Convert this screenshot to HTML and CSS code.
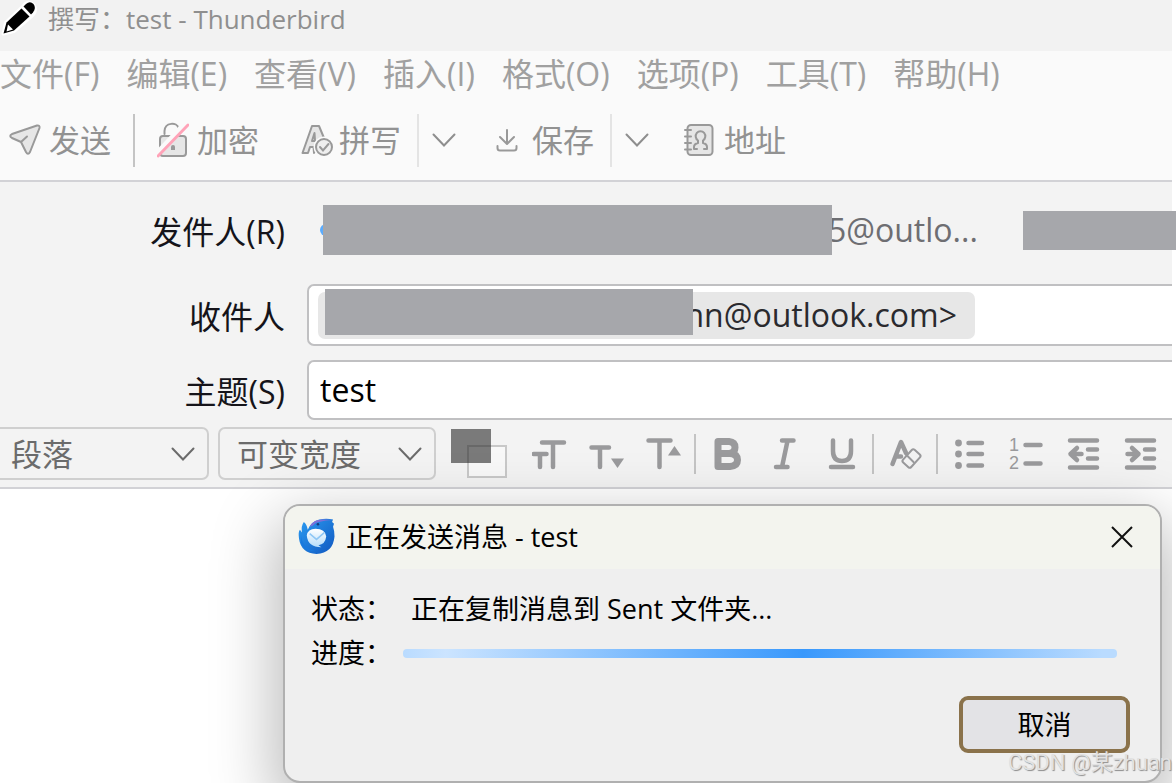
FILE: index.html
```html
<!DOCTYPE html>
<html lang="zh-CN">
<head>
<meta charset="utf-8">
<title>撰写：test - Thunderbird</title>
<link rel="stylesheet" href="styles.css">
</head>
<body>
<div class="window">
  <header class="titlebar">
    <svg class="pencil" width="38" height="38" viewBox="0 0 38 38" aria-hidden="true">
      <path d="M3 34 5.500 22.500 23 6Q28-1 34 5 38 11 31 17L14 31.500Z" fill="#fff" stroke="#fff" stroke-width="3" stroke-linejoin="round"/>
      <path d="M3.500 33.500 6.500 22.500 21.500 8.500 29.500 16.500 14 30.500Z" fill="#000"/>
      <path d="M23.500 6.500 26 4Q30 .500 33.500 4 36.500 8 33 12.500L31 14.500Z" fill="#000"/>
      <path d="M8 24.500 13 29.500 6.500 31.500Z" fill="#fff"/>
    </svg>
    <h1 class="title">撰写：test - Thunderbird</h1>
  </header>

  <nav class="menubar">
    <button class="menu">文件(F)</button>
    <button class="menu">编辑(E)</button>
    <button class="menu">查看(V)</button>
    <button class="menu">插入(I)</button>
    <button class="menu">格式(O)</button>
    <button class="menu">选项(P)</button>
    <button class="menu">工具(T)</button>
    <button class="menu">帮助(H)</button>
  </nav>

  <div class="toolbar">
    <button class="tool tool-send">
      <svg width="32" height="32" viewBox="0 0 32 32" aria-hidden="true"><path d="M28 1.500 3 10Q-.500 12 3 14L12 18 17 28Q19 31.500 21 28L30.500 4Q31 1 28 1.500ZM12 18 18 12.500" fill="#e6e6e6" stroke="#999" stroke-width="2" stroke-linejoin="round" stroke-linecap="round"/></svg>
      <span>发送</span>
    </button>
    <span class="rule"></span>
    <button class="tool tool-lock">
      <svg width="32" height="36" viewBox="0 0 32 36" aria-hidden="true"><path d="M7.500 12V9C8 0 20 0 21.500 6" fill="none" stroke="#999" stroke-width="2" stroke-linecap="round"/><rect x="3" y="14" width="26" height="20" rx="3" fill="#e6e6e6" stroke="#999" stroke-width="2"/><path d="M14 28V25A2 2 0 0 1 18 25V28Z" fill="#999"/><path d="M0 32 29 1" stroke="#fafafa" stroke-width="6"/><path d="M1 34 31 3" stroke="#ffa3b8" stroke-width="3" stroke-linecap="round"/></svg>
      <span>加密</span>
    </button>
    <button class="tool tool-spell">
      <svg width="32" height="34" viewBox="0 0 32 34" aria-hidden="true"><path d="M1.500 30 11 3H18L23 15 13 30 12.500 24H9L7 30ZM11 18H14L13.500 10Z" fill="#e6e6e6" stroke="#999" stroke-width="2" stroke-linejoin="round"/><circle cx="23" cy="24" r="10.500" fill="#fafafa"/><circle cx="23" cy="24" r="8" fill="#eee" stroke="#999" stroke-width="2"/><path d="M19 24 22 27.500 27.500 21" fill="none" stroke="#999" stroke-width="2" stroke-linecap="round"/></svg>
      <span>拼写</span>
    </button>
    <span class="rule rule-light"></span>
    <button class="drop" aria-label="拼写选项"><svg width="24" height="14" viewBox="0 0 24 14"><path d="M1.500 1.500 12 12.500 22.500 1.500" fill="none" stroke="#8e8e8e" stroke-width="2" stroke-linecap="round"/></svg></button>
    <button class="tool tool-save">
      <svg width="22" height="24" viewBox="0 0 22 24" aria-hidden="true"><path d="M11 2V15M4 9 11 16 18 9M1.500 18V20Q1.500 22.500 4 22.500H18Q20.500 22.500 20.500 20V18" fill="none" stroke="#999" stroke-width="2" stroke-linecap="round" stroke-linejoin="round"/></svg>
      <span>保存</span>
    </button>
    <span class="rule rule-light"></span>
    <button class="drop" aria-label="保存选项"><svg width="24" height="14" viewBox="0 0 24 14"><path d="M1.500 1.500 12 12.500 22.500 1.500" fill="none" stroke="#8e8e8e" stroke-width="2" stroke-linecap="round"/></svg></button>
    <button class="tool tool-book">
      <svg width="30" height="34" viewBox="0 0 30 34" aria-hidden="true"><rect x="3.500" y="2" width="25" height="30" rx="3.500" fill="#e6e6e6" stroke="#999" stroke-width="2"/><path d="M1 7H7M1 13.500H7M1 20H7M1 26.500H7" stroke="#999" stroke-width="2" stroke-linecap="round"/><path d="M10 26V24Q10 21 14 20V17.500A4.800 5 0 1 1 19 17.500V20Q23 21 23 24V26M10 26H13M23 26H20" fill="none" stroke="#999" stroke-width="2" stroke-linejoin="round" stroke-linecap="round"/></svg>
      <span>地址</span>
    </button>
  </div>

  <section class="headers">
    <label class="label" for="from">发件人(R)</label>
    <div class="from">
      <output class="identity" id="from"><span class="dot"></span><span class="mask mask-from"></span><span class="address">5@outlo...</span></output>
      <span class="mask mask-account"></span>
    </div>
    <span class="label" id="to-label">收件人</span>
    <div class="field field-to" role="group" aria-labelledby="to-label">
      <span class="pill">nn@outlook.com&gt;<span class="mask mask-pill"></span></span>
    </div>
    <label class="label" for="subject">主题(S)</label>
    <input class="field field-subject" id="subject" type="text" value="test">
  </section>

  <div class="format">
    <div class="picker picker-block">
      <select aria-label="段落格式"><option>段落</option></select>
      <svg width="24" height="14" viewBox="0 0 24 14"><path d="M1.500 1.500 12 12.500 22.500 1.500" fill="none" stroke="#6b6b6b" stroke-width="2" stroke-linecap="round"/></svg>
    </div>
    <div class="picker picker-font">
      <select aria-label="字体"><option>可变宽度</option></select>
      <svg width="24" height="14" viewBox="0 0 24 14"><path d="M1.500 1.500 12 12.500 22.500 1.500" fill="none" stroke="#6b6b6b" stroke-width="2" stroke-linecap="round"/></svg>
    </div>
    <button class="swatch" aria-label="颜色"><svg width="56" height="49" viewBox="0 0 56 49"><rect x="17" y="17" width="38" height="31" fill="#f8f8f8" stroke="#c8c8c8" stroke-width="2"/><path d="M0 0H40V34H0Z" fill="#7a7a7a"/><path d="M17 34V17H40" fill="none" stroke="#686868" stroke-width="2"/></svg></button>
    <button class="fmt" aria-label="字号"><svg class="ink" width="36" height="36" viewBox="0 0 36 36"><path d="M10 6.500H32M21 7V31M1.500 18H14.500M8 18V31"/></svg></button>
    <button class="fmt" aria-label="缩小字号"><svg class="ink" width="36" height="36" viewBox="0 0 36 36"><path d="M2.500 11.500H20M11 12V31"/><path class="solid" d="M22 22.500H35L28.500 32Z"/></svg></button>
    <button class="fmt" aria-label="放大字号"><svg class="ink" width="36" height="36" viewBox="0 0 36 36"><path d="M2.500 4.500H24.500M13.500 5V31"/><path class="solid" d="M22 19.500H35L28.500 10Z"/></svg></button>
    <span class="split"></span>
    <button class="fmt" aria-label="粗体"><svg class="ink heavy" width="36" height="36" viewBox="0 0 36 36"><path d="M8 5.500H19Q25 6 25 11.500 25 17 19 17.500H8H20Q27.500 18 27.500 24 27.500 30 20 30.500H8Z"/></svg></button>
    <button class="fmt" aria-label="斜体"><svg class="ink" width="36" height="36" viewBox="0 0 36 36"><path d="M15 4.500H26.500M9 31H20.500M20.500 5 15 31"/></svg></button>
    <button class="fmt" aria-label="下划线"><svg class="ink" width="36" height="36" viewBox="0 0 36 36"><path d="M9 4.500V15Q9 25 18 25 27 25 27 15V4.500M7 31H29"/></svg></button>
    <span class="split"></span>
    <button class="fmt" aria-label="清除格式"><svg class="ink" width="36" height="36" viewBox="0 0 36 36"><path d="M4.500 28 13 6 18 17M8 20.500H13"/><rect class="thin" x="15" y="17" width="17" height="11" rx="2" transform="rotate(-48 23.500 22.500)"/><path class="thin" d="M18 18.500 25.500 26"/></svg></button>
    <span class="split"></span>
    <button class="fmt" aria-label="项目符号列表"><svg class="ink" width="36" height="36" viewBox="0 0 36 36"><path d="M16.500 7H30M16.500 18H30M16.500 29.500H30"/><g class="solid"><circle cx="6.500" cy="7" r="3.400"/><circle cx="6.500" cy="18" r="3.400"/><circle cx="6.500" cy="29.500" r="3.400"/></g></svg></button>
    <button class="fmt" aria-label="编号列表"><svg class="ink" width="36" height="48" viewBox="0 -6 36 48"><path d="M16.500 9H31.500M16.500 27.500H31.500"/><text x="0" y="15">1</text><text x="0" y="33">2</text></svg></button>
    <button class="fmt" aria-label="减少缩进"><svg class="ink" width="36" height="36" viewBox="0 0 36 36"><path d="M4 4.500H31M4 31.500H31M22 13.500H31M22 22.500H31M4.500 18H15.500M11 12 4.500 18 11 24"/></svg></button>
    <button class="fmt" aria-label="增加缩进"><svg class="ink" width="36" height="36" viewBox="0 0 36 36"><path d="M4 4.500H31M4 31.500H31M22 13.500H31M22 22.500H31M4.500 18H15.500M9 12 15.500 18 9 24"/></svg></button>
  </div>

  <main class="editor"></main>

  <div class="overlay">
    <section class="dialog" role="dialog" aria-labelledby="dialog-title">
      <header class="dialog-head">
        <svg width="37" height="37" viewBox="0 0 38 38" aria-hidden="true">
          <defs>
            <linearGradient id="body" x1="0" y1="0" x2="1" y2="1"><stop offset="0" stop-color="#2b9cf2"/><stop offset="1" stop-color="#1158c0"/></linearGradient>
            <linearGradient id="mail" x1="0" y1="0" x2="0" y2="1"><stop offset="0" stop-color="#fff"/><stop offset="1" stop-color="#b5dcfa"/></linearGradient>
          </defs>
          <path d="M6 4Q9 6 10 12 14 3 22 1.500 29 0 36 1.500L35 4 37 6 36 9Q37.500 13 37.500 19 36 36 19 37 3 36 1 21 0 14 2 12L4 15Q3 8 6 4Z" fill="url(#body)"/>
          <path d="M12 9Q16 1 26 1.500L35 2Q28 2.500 24 3.500 18 4 15 8Z" fill="#7f70d8"/>
          <path d="M3 17Q4 31 18 34 7 35 3 26Z" fill="#1979de"/>
          <path d="M9 18Q10 11 18 11 28 11 29 19 28 27 21 28L24 30Q10 30 9 18Z" fill="url(#mail)"/>
          <path d="M12 16 19 22 27 15" fill="none" stroke="#8fc7f5" stroke-width="1.500"/>
          <circle cx="20.500" cy="6.500" r="1.300" fill="#173b7e"/>
        </svg>
        <h2 class="dialog-title" id="dialog-title">正在发送消息 - test</h2>
        <button class="close" aria-label="关闭"><svg width="22" height="22" viewBox="0 0 22 22"><path d="M1 1 21 21M21 1 1 21" stroke="#111" stroke-width="2"/></svg></button>
      </header>
      <div class="dialog-body">
        <span class="key">状态：</span>
        <span class="status">正在复制消息到 Sent 文件夹...</span>
        <label class="key" for="progress">进度：</label>
        <progress class="progress" id="progress" value="0" max="100"></progress>
        <button class="cancel">取消</button>
      </div>
    </section>
  </div>
</div>
<p class="watermark">CSDN @某zhuan</p>
</body>
</html>
```

FILE: styles.css
```css
* { box-sizing: border-box; }

body {
  margin: 0;
  position: relative;
  min-height: 100vh;
  overflow: hidden;
  background: #fff;
  font-family: "Open Sans", "Noto Sans CJK SC", sans-serif;
  font-size: 31px;
  line-height: 40px;
  color: #15141a;
}

button, input, select {
  margin: 0;
  padding: 0;
  border: 0;
  background: none;
  font: inherit;
  color: inherit;
}

svg { display: block; flex: none; }

.window {
  position: relative;
  display: flex;
  flex-direction: column;
  min-height: 100vh;
  margin-right: 4px;
}

.titlebar {
  display: flex;
  align-items: flex-start;
  gap: 10px;
  height: 51px;
  background: #f2f2f2;
}

.title {
  margin: 0;
  font-size: 26px;
  font-weight: 400;
  line-height: 38px;
  color: #8f8f8f;
}

.menubar {
  display: flex;
  gap: 27px;
  height: 49px;
  align-items: center;
  padding-bottom: 4px;
  background: #fafafa;
  color: #a0a0a0;
  font-size: 32px;
}

.menu { white-space: nowrap; }

.toolbar {
  display: flex;
  align-items: center;
  height: 82px;
  padding-left: 9px;
  background: #fafafa;
  border-bottom: 2px solid #d2d2d6;
  color: #929292;
}

.tool {
  display: flex;
  align-items: center;
  gap: 8px;
  white-space: nowrap;
}

.tool-send { margin-right: 22px; }
.tool-lock { margin: 0 42px 0 22px; }
.tool-spell { gap: 6px; margin-right: 16px; }
.tool-save { gap: 14px; margin: 0 16px 0 40px; }
.tool-book { gap: 10px; margin-left: 35px; }
.drop { margin-left: 13px; }

.rule {
  width: 2px;
  height: 53px;
  background: #c4c4c4;
}

.rule-light { background: #e4e4e4; }

.headers {
  display: grid;
  grid-template-columns: 285px 1fr;
  column-gap: 22px;
  grid-template-rows: 80px 62px 60px;
  row-gap: 14px;
  padding: 8px 0 7px;
  background: #f3f3f3;
  font-size: 32px;
}

.label {
  align-self: center;
  justify-self: end;
  padding-top: 4px;
}

.mask { background: #a6a7ab; }

.from {
  display: flex;
  align-items: center;
  margin-right: -4px;
  padding-left: 13px;
  color: #6e6e72;
}

.identity {
  display: flex;
  align-items: center;
  flex: 0 0 703px;
}

.dot {
  width: 12px;
  height: 12px;
  margin-right: -9px;
  border-radius: 50%;
  background: #5aacff;
}

.mask-from {
  position: relative;
  z-index: 1;
  flex: 0 0 509px;
  height: 50px;
}

.address { margin-left: -4px; }

.mask-account {
  flex: 1;
  height: 39px;
}

.field {
  border: 2px solid #c0c0c2;
  border-right: 0;
  border-radius: 7px 0 0 7px;
  background: #fff;
}

.field-to {
  display: flex;
  align-items: center;
  padding-left: 9px;
}

.pill {
  position: relative;
  flex: 0 0 657px;
  height: 47px;
  padding-right: 18px;
  border-radius: 7px;
  background: #e7e7e7;
  color: #2a2a2e;
  line-height: 46px;
  text-align: right;
}

.mask-pill {
  position: absolute;
  left: 7px;
  top: -3px;
  width: 368px;
  height: 46px;
}

.field-subject {
  width: 100%;
  padding-left: 11px;
  outline: 0;
  color: #000;
}

.format {
  display: flex;
  align-items: flex-start;
  height: 62px;
  background: #f3f3f3;
  border-bottom: 2px solid #d2d2d6;
}

.picker {
  display: grid;
  align-items: center;
  height: 53px;
  border: 2px solid #cfcfcf;
  border-radius: 7px;
  color: #6b6b6b;
}

.picker select {
  grid-area: 1 / 1;
  width: 100%;
  height: 49px;
  appearance: none;
}

.picker svg {
  grid-area: 1 / 1;
  justify-self: end;
  pointer-events: none;
}

.picker-block {
  width: 209px;
  margin-right: 9px;
  padding-right: 12px;
  border-left: 0;
  border-radius: 0 7px 7px 0;
}

.picker-block select { padding-left: 11px; }

.picker-font {
  width: 218px;
  margin-right: 15px;
  padding-right: 12px;
}

.picker-font select { padding-left: 17px; }

.swatch { margin: 2px 14px 0 0; }

.fmt {
  display: grid;
  place-items: center;
  flex: 0 0 57px;
  height: 53px;
}

.ink {
  fill: none;
  stroke: #9a9a9c;
  stroke-width: 4.500px;
  stroke-linecap: round;
  stroke-linejoin: round;
}

.heavy { stroke-width: 7px; }
.ink .thin { stroke-width: 2px; }

.ink .solid {
  fill: #9a9a9c;
  stroke: none;
}

.ink text {
  fill: #9a9a9c;
  stroke: none;
  font: 18px "Liberation Sans", sans-serif;
}

.split {
  flex: none;
  width: 2px;
  height: 40px;
  margin: 7px 3px 0 2px;
  background: #c4c4c4;
}

.editor {
  flex: 1;
  background: #fff;
}

.overlay {
  position: absolute;
  inset: 0;
  overflow: hidden;
}

.dialog {
  position: absolute;
  top: 504px;
  left: 283px;
  right: 10px;
  border: 2px solid #b0b0b0;
  border-radius: 17px;
  overflow: hidden;
  background: #efefef;
  box-shadow: 0 24px 64px 8px rgba(0, 0, 0, 0.28);
  color: #000;
  font-size: 27px;
}

.dialog-head {
  display: flex;
  align-items: center;
  height: 63px;
  padding: 0 27px 2px 13px;
  background: #f3f4ee;
}

.dialog-title {
  flex: 1;
  margin: 0 0 0 11px;
  font-size: 27px;
  font-weight: 400;
}

.dialog-body {
  display: grid;
  grid-template-columns: 92px 1fr;
  grid-template-rows: 44px 44px;
  align-items: center;
  padding: 18px 30px 28px 26px;
}

.status { padding-left: 8px; }

.progress {
  appearance: none;
  width: auto;
  height: 9px;
  margin-right: 13px;
  border: 0;
  border-radius: 4px;
  overflow: hidden;
}

.progress::-webkit-progress-bar {
  background: linear-gradient(90deg, #b9dbff 0%, #cbe4ff 6%, #3898fc 56%, #b9dbff 98%);
}

.cancel {
  grid-column: 2;
  justify-self: end;
  width: 171px;
  height: 57px;
  margin-top: 21px;
  border: 4px solid #8a724b;
  border-radius: 9px;
  background: #e3e3e6;
}

.watermark {
  position: absolute;
  right: 4px;
  bottom: 4px;
  margin: 0;
  font-family: Roboto, "Noto Sans CJK SC", sans-serif;
  font-size: 22px;
  line-height: 32px;
  color: #e2e2e2;
  text-shadow: 1px 1px 1px #8c8c8c;
}
```
